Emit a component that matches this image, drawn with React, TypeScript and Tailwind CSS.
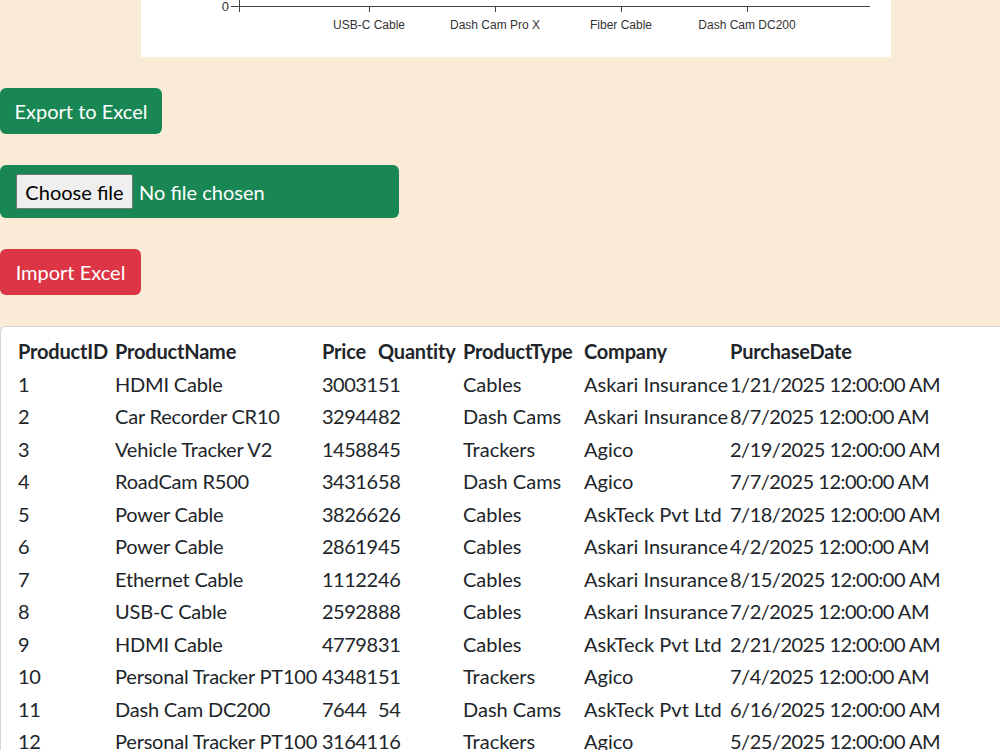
import React from 'react';

// Product rows shown in the table
const products = [
  { id: 1, name: 'HDMI Cable', price: 30031, qty: 51, type: 'Cables', company: 'Askari Insurance', date: '1/21/2025 12:00:00 AM' },
  { id: 2, name: 'Car Recorder CR10', price: 32944, qty: 82, type: 'Dash Cams', company: 'Askari Insurance', date: '8/7/2025 12:00:00 AM' },
  { id: 3, name: 'Vehicle Tracker V2', price: 14588, qty: 45, type: 'Trackers', company: 'Agico', date: '2/19/2025 12:00:00 AM' },
  { id: 4, name: 'RoadCam R500', price: 34316, qty: 58, type: 'Dash Cams', company: 'Agico', date: '7/7/2025 12:00:00 AM' },
  { id: 5, name: 'Power Cable', price: 38266, qty: 26, type: 'Cables', company: 'AskTeck Pvt Ltd', date: '7/18/2025 12:00:00 AM' },
  { id: 6, name: 'Power Cable', price: 28619, qty: 45, type: 'Cables', company: 'Askari Insurance', date: '4/2/2025 12:00:00 AM' },
  { id: 7, name: 'Ethernet Cable', price: 11122, qty: 46, type: 'Cables', company: 'Askari Insurance', date: '8/15/2025 12:00:00 AM' },
  { id: 8, name: 'USB-C Cable', price: 25928, qty: 88, type: 'Cables', company: 'Askari Insurance', date: '7/2/2025 12:00:00 AM' },
  { id: 9, name: 'HDMI Cable', price: 47798, qty: 31, type: 'Cables', company: 'AskTeck Pvt Ltd', date: '2/21/2025 12:00:00 AM' },
  { id: 10, name: 'Personal Tracker PT100', price: 43481, qty: 51, type: 'Trackers', company: 'Agico', date: '7/4/2025 12:00:00 AM' },
  { id: 11, name: 'Dash Cam DC200', price: 7644, qty: 54, type: 'Dash Cams', company: 'AskTeck Pvt Ltd', date: '6/16/2025 12:00:00 AM' },
  { id: 12, name: 'Personal Tracker PT100', price: 31641, qty: 16, type: 'Trackers', company: 'Agico', date: '5/25/2025 12:00:00 AM' },
];

// Bottom strip of the sales chart (x axis + labels)
const ChartStrip = () => {
  const ticks = [
    { x: 228, label: 'USB-C Cable' },
    { x: 354, label: 'Dash Cam Pro X' },
    { x: 480, label: 'Fiber Cable' },
    { x: 606, label: 'Dash Cam DC200' },
  ];
  return (
    <div className="ml-[141px] w-[750px] h-[57px] bg-white">
      <svg width="750" height="57" viewBox="0 0 750 57">
        <line x1="98.5" y1="0" x2="98.5" y2="12" stroke="#444" strokeWidth="1" />
        <line x1="90" y1="6.5" x2="729" y2="6.5" stroke="#444" strokeWidth="1" />
        {ticks.map((t) => (
          <line key={t.x} x1={t.x + 0.5} y1="6" x2={t.x + 0.5} y2="12" stroke="#444" strokeWidth="1" />
        ))}
        <text x="88" y="11" textAnchor="end" fontSize="13" fill="#333" fontFamily="'Liberation Sans', sans-serif">0</text>
        {ticks.map((t) => (
          <text key={t.label} x={t.x} y="29" textAnchor="middle" fontSize="12" fill="#333" fontFamily="'Liberation Sans', sans-serif">
            {t.label}
          </text>
        ))}
      </svg>
    </div>
  );
};

export default function App() {
  return (
    <div className="min-h-screen bg-[#faebd7] text-[#212529] text-[20px] font-['Lato',sans-serif]">
      <ChartStrip />

      <div className="flex flex-col items-start gap-[31px] mt-[31px]">
        {/* Export button */}
        <button className="h-[46px] w-[162px] rounded-md bg-[#198754] text-white leading-none">
          Export to Excel
        </button>

        {/* File chooser */}
        <div className="w-[399px] h-[53px] rounded-md bg-[#198754] flex items-center pl-4 gap-[6px]">
          <span className="h-[35px] w-[117px] flex items-center justify-center bg-[#efefef] border border-[#767676] rounded-[2px] text-black">
            Choose file
          </span>
          <span className="text-white">No file chosen</span>
        </div>

        {/* Import button */}
        <button className="h-[46px] w-[141px] rounded-md bg-[#dc3545] text-white leading-none">
          Import Excel
        </button>

        {/* Products table */}
        <div className="w-full bg-white border-l border-t border-[#d5d5d5] rounded-tl-md pl-[17px] pt-[8px]">
          <table className="table-fixed border-collapse text-left">
            <colgroup>
              <col className="w-[97px]" />
              <col className="w-[207px]" />
              <col className="w-[56px]" />
              <col className="w-[85px]" />
              <col className="w-[121px]" />
              <col className="w-[146px]" />
              <col className="w-[240px]" />
            </colgroup>
            <thead>
              <tr className="h-[32.5px] font-bold tracking-[-0.2px]">
                <th>ProductID</th>
                <th>ProductName</th>
                <th>Price</th>
                <th>Quantity</th>
                <th>ProductType</th>
                <th>Company</th>
                <th>PurchaseDate</th>
              </tr>
            </thead>
            <tbody>
              {products.map((p) => (
                <tr key={p.id} className="h-[32.5px] whitespace-nowrap">
                  <td className="tracking-[-0.4px]">{p.id}</td>
                  <td className="tracking-[-0.2px]">{p.name}</td>
                  <td className="tracking-[-0.5px]">{p.price}</td>
                  <td className="tracking-[-0.4px]">{p.qty}</td>
                  <td>{p.type}</td>
                  <td>{p.company}</td>
                  <td className="tracking-[-0.5px]">{p.date}</td>
                </tr>
              ))}
            </tbody>
          </table>
        </div>
      </div>
    </div>
  );
}
